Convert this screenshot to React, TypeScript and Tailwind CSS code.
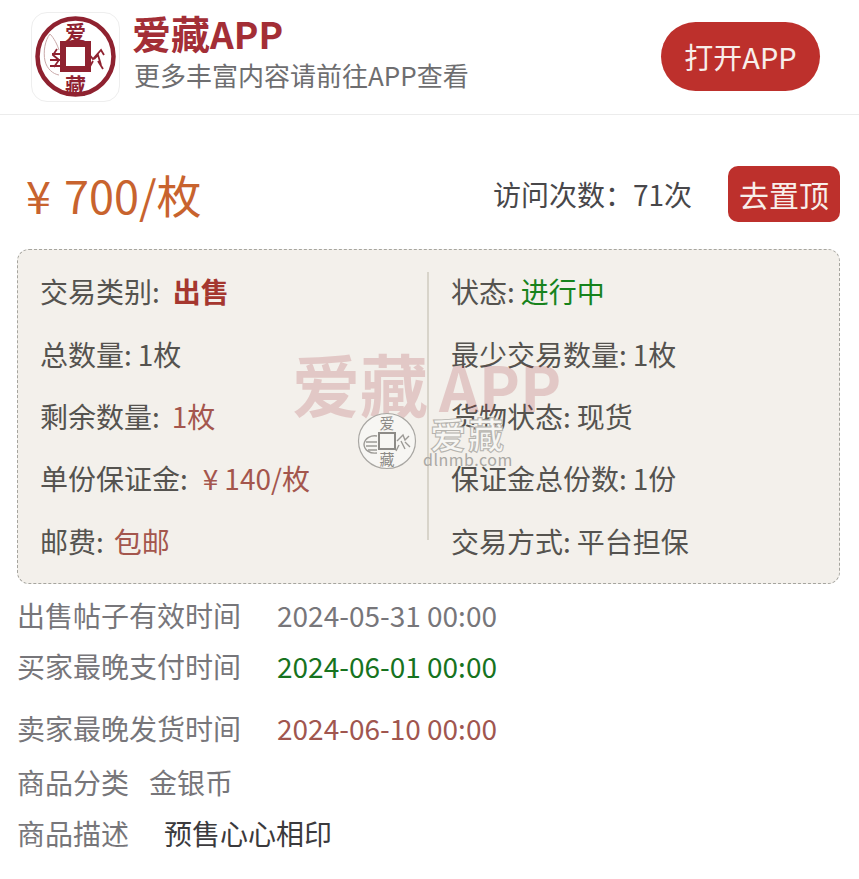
const CJK = { fontFamily: '"Noto Sans CJK SC", "Noto Sans", sans-serif' };

function Row({ children, label }: { children?: React.ReactNode; label: string }) {
  return (
    <div className="h-[62.4px] flex items-center text-[28px] leading-none text-[#55534f] whitespace-nowrap">
      <span>{label}:</span>
      {children}
    </div>
  );
}

function Line({ label, value, cls, h, gap = "w-[36px]" }: { label: string; value: string; cls: string; h: string; gap?: string }) {
  return (
    <div className={`flex items-center text-[28px] leading-none whitespace-nowrap text-[#77767a] ${h}`}>
      <span>{label}</span>
      <span className={`shrink-0 ${gap}`} />
      <span className={cls}>{value}</span>
    </div>
  );
}

export default function App() {
  return (
    <div className="w-[859px] h-[879px] bg-white overflow-hidden" style={CJK}>
      <header className="h-[115px] border-b border-[#ececec] flex items-center pl-[31px] pr-[39px]">
        <div className="w-[89px] h-[90px] rounded-[16px] border border-[#eeeeee] bg-white flex items-center justify-center relative -mt-[1px]">
          <svg width="81" height="81" viewBox="0 0 81 81" fill="none">
            <circle cx="40.5" cy="40.5" r="38" stroke="#8f2230" strokeWidth="4.5" />
            <rect x="28" y="28" width="25" height="25" fill="#fff" stroke="#8f2230" strokeWidth="6" />
            <path d="M24 34c-3-9-7-14-9-16-5 6-7 18-5 27 2 8 8 13 14 14" stroke="#c9a9a9" strokeWidth="1" />
            <path d="M17 38h10M15 44h12M15 50h12M22 33l-4 6 6 5-5 7" stroke="#8f2230" strokeWidth="1.8" />
            <path d="M53 37l5 6 8-9 3 5M59 43l4-4 3 10M58 45l-5 9M63 45l5 8" stroke="#8f2230" strokeWidth="1.8" />
          </svg>
          <span className="absolute left-0 right-0 top-[8px] text-center text-[21px] leading-none text-[#8f2230] font-bold">爱</span>
          <span className="absolute left-0 right-0 top-[61px] text-center text-[21px] leading-none text-[#8f2230] font-bold">藏</span>
        </div>
        <div className="ml-[12px] -mt-[14px]">
          <div className="text-[39px] leading-[46px] font-bold text-[#a32e36] whitespace-nowrap">爱藏<span className="text-[37px]">APP</span></div>
          <div className="text-[26px] leading-[34px] text-[#6e6e70] ml-[2px] mt-[2px] whitespace-nowrap">更多丰富内容请前往APP查看</div>
        </div>
        <button className="ml-auto w-[159px] h-[69px] rounded-full bg-[#bd302c] text-[#f8eeea] text-[29px] leading-none -mt-[2px]">打开APP</button>
      </header>

      <div className="h-[134px] flex items-center pt-[24px] pl-[26px] pr-[19px]">
        <div className="text-[45px] leading-none text-[#c8632e] whitespace-nowrap"><span className="mr-[13px]">¥</span>700/枚</div>
        <div className="ml-auto text-[28px] leading-none text-[#48474a] whitespace-nowrap">访问次数：71次</div>
        <button className="ml-[36px] w-[112px] h-[56px] rounded-[10px] bg-[#bd302c] text-[#f8eeea] text-[30px] leading-none">去置顶</button>
      </div>

      <section className="relative mx-[17px] mr-[19px] h-[335px] rounded-[12px] border border-dashed border-[#a6a59f] bg-[#f3f0eb] flex items-start py-[10px] pl-[22px]">
        <div className="w-[389px] h-[268px] border-r-2 border-[#d8d4ca] mt-[12px]">
          <div className="-mt-[12px]">
            <Row label="交易类别"><span className="ml-[13px] font-bold text-[#a5372f]">出售</span></Row>
            <Row label="总数量"><span className="ml-[6px]">1枚</span></Row>
            <Row label="剩余数量"><span className="ml-[12px] text-[#a4564d]">1枚</span></Row>
            <Row label="单份保证金"><span className="ml-[15px] text-[#a4564d]"><span className="mr-[6px]">¥</span>140/枚</span></Row>
            <Row label="邮费"><span className="ml-[10px] text-[#a4564d]">包邮</span></Row>
          </div>
        </div>
        <div className="pl-[22px]">
          <Row label="状态"><span className="ml-[6px] text-[#17831c]">进行中</span></Row>
          <Row label="最少交易数量"><span className="ml-[6px]">1枚</span></Row>
          <Row label="货物状态"><span className="ml-[6px]">现货</span></Row>
          <Row label="保证金总份数"><span className="ml-[6px]">1份</span></Row>
          <Row label="交易方式"><span className="ml-[6px]">平台担保</span></Row>
        </div>
        <div className="absolute left-[274px] top-[99px] text-[68px] leading-none font-bold text-[#a32e36] opacity-[0.2] whitespace-nowrap pointer-events-none">爱藏<span className="text-[62px] ml-[11px]">APP</span></div>
        <div className="absolute left-[339px] top-[162px] flex items-center pointer-events-none">
          <div className="relative w-[60px] h-[58px] shrink-0">
            <svg width="60" height="58" viewBox="0 0 60 58" fill="none">
              <ellipse cx="30" cy="29" rx="28.5" ry="27.5" fill="#f7f6f3" stroke="#a9a7a3" strokeWidth="1.2" />
              <rect x="22" y="21" width="16" height="16" stroke="#8d8b87" strokeWidth="2" />
              <path d="M20 24c-6-1-12 2-13 8 0 6 6 10 13 9" stroke="#9c9a96" strokeWidth="1.4" />
              <path d="M9 30h11M9 34h11M11 38h9" stroke="#9c9a96" strokeWidth="1.4" />
              <path d="M40 29l6-6 2 5 4-4M44 29l4 8M42 33l-3 6M48 30l5 5" stroke="#9c9a96" strokeWidth="1.4" />
            </svg>
            <span className="absolute left-0 right-0 top-[3px] text-center text-[15px] leading-none text-[#8d8b87]">爱</span>
            <span className="absolute left-0 right-0 top-[39px] text-center text-[15px] leading-none text-[#8d8b87]">藏</span>
          </div>
          <div className="ml-[6px] text-center">
            <div className="text-[36px] leading-[36px] font-bold text-[#f7f6f3] tracking-[2px]" style={{ WebkitTextStroke: "1px #b5b3ae" }}>爱藏</div>
            <div className="text-[16px] leading-[16px] text-[#aaa8a4] tracking-[0.5px]">dlnmb.com</div>
          </div>
        </div>
      </section>

      <div className="pl-[17px]">
        <Line label="出售帖子有效时间" value="2024-05-31 00:00" cls="text-[#77767a]" h="h-[62px]" />
        <Line label="买家最晚支付时间" value="2024-06-01 00:00" cls="text-[#17731f]" h="h-[36px] mt-[2px]" />
        <Line label="卖家最晚发货时间" value="2024-06-10 00:00" cls="text-[#a0564f]" h="h-[88px]" />
        <Line label="商品分类" value="金银币" cls="text-[#77767a]" h="h-[20px]" gap="w-[20px]" />
        <Line label="商品描述" value="预售心心相印" cls="text-[#3b3a3d]" h="h-[82px]" gap="w-[35px]" />
      </div>
    </div>
  );
}
